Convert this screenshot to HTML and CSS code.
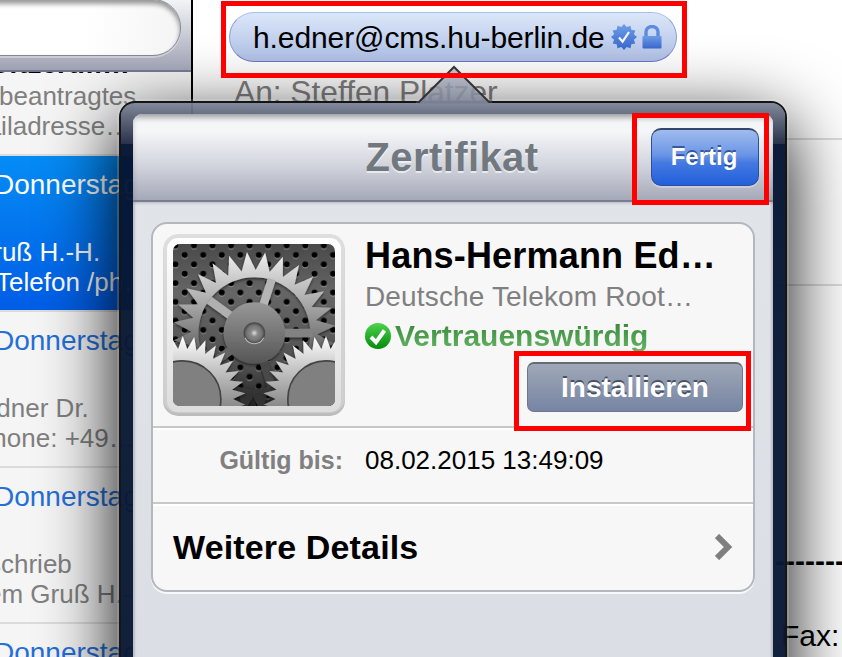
FILE: index.html
```html
<!DOCTYPE html>
<html lang="de">
  <head>
    <meta charset="utf-8" />
    <meta name="viewport" content="width=device-width, initial-scale=1.0" />
    <title>Zertifikat</title>
    <link rel="stylesheet" href="styles.css">
  </head>
  <body>
    <div class="app">
      <div class="sidebar">
        <div class="search-bar"><div class="search-field"></div></div>
        <div class="mails">
          <div class="mail">
            <div class="date"></div>
            <div class="subject">Softzertifi…</div>
            <p class="cut-1">beantragtes</p>
            <p class="cut-35">Mailadresse…</p>
          </div>
          <div class="mail selected">
            <div class="date">Donnerstag</div>
            <div class="subject"></div>
            <p class="cut-27">Gruß H.-H.</p>
            <p class="cut-4">Telefon /ph…</p>
          </div>
          <div class="mail">
            <div class="date">Donnerstag</div>
            <div class="subject"></div>
            <p class="cut-21">Edner Dr.</p>
            <p class="cut-25">Phone: +49…</p>
          </div>
          <div class="mail">
            <div class="date">Donnerstag</div>
            <div class="subject"></div>
            <p class="cut-12">schrieb</p>
            <p class="cut-13">em Gruß H.-</p>
          </div>
          <div class="mail">
            <div class="date">Donnerstag</div>
          </div>
        </div>
      </div>

      <div class="message">
        <div class="head">
          <div class="sender">
            <span>h.edner@cms.hu-berlin.de</span>
            <svg class="verified" viewBox="0 0 26 26">
              <defs>
                <linearGradient id="blue" x1="0" y1="0" x2="0" y2="1">
                  <stop offset="0" stop-color="#6d9de8" />
                  <stop offset="1" stop-color="#3a68cd" />
                </linearGradient>
              </defs>
              <path id="seal" fill="url(#blue)" />
              <path d="M8 13.5l3.6 4.2L18 8" fill="none" stroke="#f4f7ff" stroke-width="2.2" />
            </svg>
            <svg class="lock" viewBox="0 0 20 24">
              <path d="M4 12V7a6 5.5 0 0 1 12 0v5" fill="none" stroke="#5c8ce0" stroke-width="3.4" />
              <rect x="0.5" y="11" width="19" height="12.5" rx="1" fill="url(#blue)" />
            </svg>
          </div>
          <div class="to">An: Steffen Platzer</div>
        </div>
        <div class="subject-row"></div>
        <div class="text">
          <div class="rule">-------</div>
          <div class="fax">Fax:</div>
        </div>
      </div>
    </div>

    <div class="popover">
      <svg class="arrow" viewBox="0 0 76 40">
        <defs>
          <linearGradient id="arrowFill" x1="0" y1="0" x2="0" y2="1">
            <stop offset="0" stop-color="#b4b8c6" stop-opacity=".8" />
            <stop offset=".85" stop-color="#858b9d" stop-opacity=".85" />
            <stop offset="1" stop-color="#7b8397" />
          </linearGradient>
        </defs>
        <path d="M1 39L3 37L38 2L73 37L75 39z" fill="url(#arrowFill)" />
        <path d="M0 37H3L38 2L73 37H76" fill="none" stroke="#333" stroke-width="2" />
      </svg>
      <div class="content">
        <div class="navbar">
          <h1>Zertifikat</h1>
          <div class="button done">Fertig</div>
        </div>
        <div class="card">
          <div class="cert">
            <div class="icon">
              <svg viewBox="69 72 484 484">
                <defs>
                  <linearGradient id="plate" x1="0" y1="0" x2="0" y2="1">
                    <stop offset="0" stop-color="#494949" />
                    <stop offset=".3" stop-color="#666" />
                    <stop offset=".75" stop-color="#505050" />
                    <stop offset="1" stop-color="#222" />
                  </linearGradient>
                  <linearGradient id="metal" gradientUnits="userSpaceOnUse" x1="0" y1="100" x2="0" y2="520">
                    <stop offset="0" stop-color="#eee" />
                    <stop offset=".35" stop-color="#aaa" />
                    <stop offset=".6" stop-color="#777" />
                    <stop offset=".8" stop-color="#444" />
                    <stop offset="1" stop-color="#333" />
                  </linearGradient>
                  <linearGradient id="hub" x1="0" y1="0" x2="0" y2="1">
                    <stop offset="0" stop-color="#989898" />
                    <stop offset="1" stop-color="#555" />
                  </linearGradient>
                  <linearGradient id="bright" gradientUnits="userSpaceOnUse" x1="0" y1="350" x2="0" y2="556">
                    <stop offset="0" stop-color="#fff" />
                    <stop offset=".4" stop-color="#ccc" />
                    <stop offset="1" stop-color="#8a8a8a" />
                  </linearGradient>
                  <radialGradient id="pin">
                    <stop offset="0" stop-color="#ddd" />
                    <stop offset=".35" stop-color="#888" />
                    <stop offset=".7" stop-color="#777" />
                    <stop offset="1" stop-color="#4a4a4a" />
                  </radialGradient>
                  <pattern id="holes" patternUnits="userSpaceOnUse" x="90.2" y="91" width="55.4" height="56">
                    <circle cx="13.8" cy="17" r="9" fill="#999" />
                    <circle cx="41.5" cy="45" r="9" fill="#999" />
                    <circle cx="13.8" cy="14" r="9" />
                    <circle cx="41.5" cy="42" r="9" />
                  </pattern>
                  <filter id="drop" x="-10%" y="-10%" width="120%" height="120%">
                    <feDropShadow dx="0" dy="4" stdDeviation="4" flood-color="#000" flood-opacity=".6" />
                  </filter>
                </defs>
                <rect x="69" y="72" width="484" height="484" fill="url(#plate)" />
                <rect x="69" y="72" width="484" height="484" fill="url(#holes)" />
                <g filter="url(#drop)">
                  <path id="bigGear" fill="url(#metal)" fill-rule="evenodd" />
                  <!-- spokes -->
                  <g fill="none" stroke-width="25">
                    <path d="M380 338H487" stroke="#828282" />
                    <path d="M333 273L364 177" stroke="#b5b5b5" />
                    <path d="M257 298L177 240" stroke="#b0b0b0" />
                    <path d="M257 378L177 436" stroke="#666" />
                    <path d="M333 403L364 499" stroke="#484848" />
                  </g>
                  <circle cx="312" cy="338" r="92" fill="url(#hub)" />
                </g>
                <circle cx="312" cy="338" r="31" fill="url(#pin)" stroke="#4b4b4b" stroke-width="3" />
                <path d="M284 352a31 31 0 0 0 56 0" fill="none" stroke="#bbb" stroke-width="3" />
                <g filter="url(#drop)">
                  <path id="leftGear" fill="url(#bright)" />
                  <path id="rightGear" fill="url(#bright)" />
                </g>
                <circle cx="98" cy="535" r="114" fill="#808080" stroke="#444" stroke-width="5" />
                <circle cx="526" cy="535" r="114" fill="#808080" stroke="#444" stroke-width="5" />
              </svg>
            </div>
            <div class="info">
              <h2>Hans-Hermann Ed…</h2>
              <div class="issuer">Deutsche Telekom Root…</div>
              <div class="trust">
                <svg viewBox="0 0 26 26">
                  <defs>
                    <linearGradient id="green" x1="0" y1="0" x2="0" y2="1">
                      <stop offset="0" stop-color="#4fd350" />
                      <stop offset=".6" stop-color="#1fa824" />
                      <stop offset="1" stop-color="#078a0a" />
                    </linearGradient>
                  </defs>
                  <circle cx="13" cy="13" r="13" fill="url(#green)" />
                  <path d="M6 14l5 5.2L19.5 7.5" fill="none" stroke="#fff" stroke-width="4" />
                </svg>
                <span>Vertrauenswürdig</span>
              </div>
              <div class="button install">Installieren</div>
            </div>
          </div>
          <div class="valid">
            <b>Gültig bis:</b>
            <span>08.02.2015 13:49:09</span>
          </div>
          <div class="details">
            <span>Weitere Details</span>
            <svg viewBox="0 0 18 26"><path d="M2 2l11 11L2 24" fill="none" stroke="#7f7f7f" stroke-width="6" /></svg>
          </div>
        </div>
      </div>
    </div>

    <!-- red markers -->
    <div class="marker mark-sender"></div>
    <div class="marker mark-done"></div>
    <div class="marker mark-install"></div>

    <script>
      function star(cx, cy, tip, root, teeth, offset) {
        var d = "";
        for (var i = 0; i < teeth * 2; i++) {
          var r = i % 2 ? root : tip;
          var a = (offset + i * 180 / teeth - 90) * Math.PI / 180;
          d += (i ? "L" : "M") + (cx + r * Math.cos(a)).toFixed(1) + " " + (cy + r * Math.sin(a)).toFixed(1);
        }
        return d + "z";
      }

      // ring opening of the big gear
      var hole = "M145 338a167 167 0 1 0 334 0a167 167 0 1 0 -334 0z";
      document.getElementById("bigGear").setAttribute("d", star(312, 338, 243, 188, 28, -5.2) + hole);
      document.getElementById("leftGear").setAttribute("d", star(98, 535, 188, 150, 34, 0));
      document.getElementById("rightGear").setAttribute("d", star(526, 535, 188, 150, 34, 0));
      document.getElementById("seal").setAttribute("d", star(13, 13, 13, 10.3, 12, 0));
    </script>
  </body>
</html>
```

FILE: styles.css
```css
* {
  padding: 0;
  margin: 0;
  box-sizing: border-box;
}
html {
  overflow: hidden;
}
body {
  width: 842px;
  height: 657px;
  overflow: hidden;
  position: relative;
  background: #fff;
  font-family: "Liberation Sans", Helvetica, Arial, sans-serif;
}
svg {
  display: block;
  flex: none;
}
.app {
  display: flex;
  height: 657px;
  overflow: hidden;
}

/* mail list */
.sidebar {
  width: 193px;
  flex: none;
  border-right: 2px solid #000;
  background: #f5f5f5;
  overflow: hidden;
}
.search-bar {
  position: relative;
  z-index: 1;
  height: 72px;
  background: linear-gradient(#f3f4f7, #c9ccd6 50%, #9da1b2);
  border-bottom: 2px solid #70748c;
}
.search-field {
  width: 241px;
  height: 57px;
  margin-left: -60px;
  background: linear-gradient(100deg, #fff 60%, #f4f4f4);
  border: 1px solid #85878f;
  border-radius: 28px;
  box-shadow: inset 0 4px 5px rgba(0, 0, 0, 0.4), 0 2px 0 rgba(255, 255, 255, 0.35);
  transform: translateY(-1px);
}
.mails {
  margin-top: -72px;
}
.mail {
  height: 156px;
  padding-top: 10px;
  border-bottom: 2px solid #dcdcdc;
  white-space: nowrap;
  color: #808080;
}
.date {
  height: 36px;
  line-height: 38px;
  margin-left: -6px;
  font-size: 28px;
  color: #246fd8;
}
.subject {
  height: 35px;
  line-height: 36px;
  margin-left: -27px;
  font-size: 28px;
  font-weight: bold;
  color: #000;
}
.mail p {
  font-size: 26px;
  line-height: 30px;
}
.mail.selected {
  background: linear-gradient(#058cf5, #015de6);
}
.mail.selected,
.selected .date {
  color: #fff;
}
.cut-1 { margin-left: -1px; }
.cut-4 { margin-left: -4px; }
.cut-12 { margin-left: -12px; }
.cut-13 { margin-left: -13px; }
.cut-21 { margin-left: -21px; }
.cut-25 { margin-left: -25px; }
.cut-27 { margin-left: -27px; }
.cut-35 { margin-left: -35px; }

/* message */
.message {
  flex: 1;
  font-size: 30px;
  overflow: hidden;
  white-space: nowrap;
}
.head {
  height: 140px;
  padding: 12px 0 0 36px;
  border-bottom: 2px solid #ddd;
}
.sender {
  display: flex;
  align-items: center;
  width: 448px;
  height: 50px;
  padding-left: 23px;
  border: 1px solid #8c9ddb;
  border-top-color: #a9bfec;
  border-bottom-color: #6c78c8;
  border-radius: 25px;
  background: linear-gradient(#dbe6f8, #b0c1e6);
}
.sender span {
  line-height: 50px;
  padding-top: 2px;
  letter-spacing: -0.1px;
}
.verified {
  width: 26px;
  height: 26px;
  margin-left: 6px;
}
.lock {
  width: 20px;
  height: 24px;
  margin-left: 5px;
}
.to {
  margin: 10px 0 0 5px;
  font-size: 31.7px;
  line-height: 40px;
  color: #808080;
}
.subject-row {
  height: 146px;
  border-bottom: 2px solid #ddd;
}
.text {
  padding: 255px 0 0 582px;
}
.rule {
  line-height: 40px;
  font-weight: bold;
}
.fax {
  margin: 33px 0 0 6px;
  line-height: 44px;
}

/* popover */
.popover {
  position: absolute;
  left: 119px;
  top: 101px;
  width: 668px;
  height: 620px;
  padding: 11px 12px 0;
  border: 2px solid #151515;
  border-radius: 16px;
  background: linear-gradient(
    rgba(124, 132, 151, 0.95),
    rgba(98, 105, 125, 0.95) 11px,
    rgba(35, 44, 70, 0.97) 41px,
    rgba(5, 20, 50, 0.97) 41px,
    rgba(10, 25, 53, 0.97) 300px
  );
  background-clip: padding-box;
  box-shadow: 0 0 0 2px rgba(255, 255, 255, 0.15), 0 22px 74px rgba(0, 0, 0, 1);
}
.arrow {
  position: absolute;
  left: 295px;
  top: -38px;
  width: 76px;
  height: 40px;
}
.content {
  height: 600px;
  border-radius: 9px 9px 0 0;
  background: linear-gradient(#e2e5ea, #dadde3);
  box-shadow: inset 2px 0 2px rgba(120, 125, 140, 0.35), inset -2px 0 2px rgba(120, 125, 140, 0.35);
  overflow: hidden;
}
.navbar {
  display: grid;
  grid-template-columns: 1fr auto 1fr;
  align-items: start;
  height: 88px;
  padding: 14px 14px 0 12px;
  background: linear-gradient(#f5f6f8 20%, #d2d4dd 60%, #a5a8b7);
  border-bottom: 2px solid #787d92;
  box-shadow: inset 0 5px 6px -2px rgba(0, 0, 0, 0.4), 0 1px 3px rgba(0, 0, 0, 0.2);
}
h1 {
  grid-column: 2;
  font-size: 40px;
  line-height: 59px;
  letter-spacing: 0.4px;
  color: #717880;
  text-shadow: 0 2px 0 rgba(255, 255, 255, 0.6);
}
.button {
  color: #fff;
  font-weight: bold;
  text-align: center;
}
.done {
  justify-self: end;
  width: 108px;
  height: 58px;
  padding-right: 2px;
  font-size: 24px;
  line-height: 54px;
  border: 1px solid #2d4f9c;
  border-top: 2px solid #34466b;
  border-radius: 10px;
  background: linear-gradient(#a0bcee, #6b95e6 45%, #4479e1 60%, #225fdc);
  text-shadow: 0 -2px 0 rgba(20, 45, 110, 0.65);
  box-shadow: 0 2px 0 rgba(255, 255, 255, 0.3);
}
.card {
  width: 604px;
  height: 370px;
  margin: 20px 0 0 18px;
  background: #f7f7f7;
  border: 2px solid #b3b7be;
  border-radius: 16px;
  box-shadow: 0 2px 0 rgba(255, 255, 255, 0.8);
}
.cert {
  display: flex;
  height: 204px;
  padding: 10px 10px 0;
  border-bottom: 2px solid #c8c8c8;
}
.icon {
  width: 182px;
  height: 182px;
  flex: none;
  padding: 10px;
  border-radius: 15px;
  background: linear-gradient(#fff, #dedede) content-box, linear-gradient(#fff, #dcdcdc);
  box-shadow: inset 0 0 0 4px rgba(190, 190, 190, 0.5), inset 0 -3px 1px #bbb;
}
.icon svg {
  width: 162px;
  height: 162px;
  border-radius: 7px;
  overflow: hidden;
}
.info {
  display: flex;
  flex-direction: column;
  flex: 1;
  margin-left: 20px;
  white-space: nowrap;
}
h2 {
  font-size: 36px;
  line-height: 44px;
  letter-spacing: 0.18px;
}
.issuer {
  font-size: 28px;
  line-height: 38px;
  letter-spacing: 0.15px;
  color: #808080;
}
.trust {
  display: flex;
  align-items: center;
  height: 40px;
  font-size: 30px;
  font-weight: bold;
}
.trust svg {
  width: 26px;
  height: 26px;
  margin-right: 4px;
}
.trust span {
  line-height: 40px;
  background: linear-gradient(#3b8c3c 20%, #64b264 85%);
  background-clip: text;
  -webkit-background-clip: text;
  color: transparent;
}
.install {
  align-self: flex-end;
  width: 216px;
  height: 50px;
  margin-top: 6px;
  font-size: 28px;
  line-height: 48px;
  border: 1px solid #6e7689;
  border-top: 2px solid #666a73;
  border-radius: 7px;
  background: linear-gradient(#a0a8b7, #8b96ad 50%, #7685a4);
  text-shadow: 0 -2px 0 rgba(50, 58, 75, 0.75);
}
.valid {
  display: flex;
  height: 76px;
  line-height: 65px;
  border-bottom: 2px solid #c8c8c8;
  box-shadow: inset 0 2px 0 #fff;
  font-size: 26px;
}
.valid b {
  width: 190px;
  margin-right: 22px;
  text-align: right;
  font-size: 25px;
  color: #808080;
}
.details {
  display: flex;
  align-items: center;
  justify-content: space-between;
  height: 86px;
  padding: 0 20px;
  box-shadow: inset 0 2px 0 #fff;
  border-radius: 0 0 14px 14px;
  font-size: 34px;
  font-weight: bold;
  letter-spacing: 0.15px;
}
.details svg {
  width: 18px;
  height: 26px;
}

.marker {
  position: absolute;
  border: 5px solid #f00;
}
.mark-sender {
  left: 221px;
  top: 1px;
  width: 466px;
  height: 77px;
}
.mark-done {
  left: 632px;
  top: 113px;
  width: 137px;
  height: 92px;
}
.mark-install {
  left: 514px;
  top: 351px;
  width: 237px;
  height: 80px;
}
```
